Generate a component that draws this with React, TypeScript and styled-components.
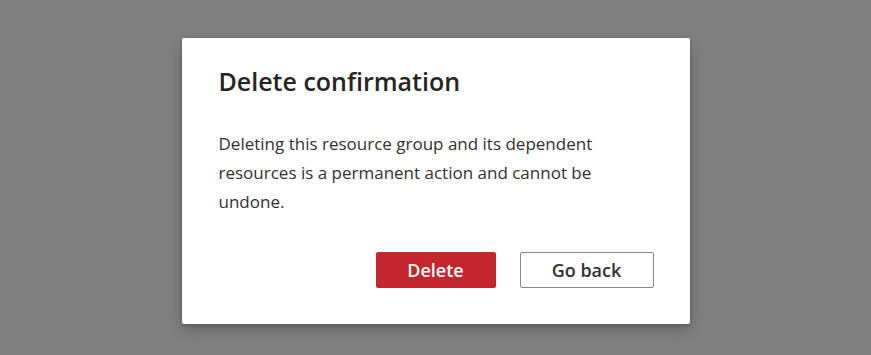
import styled, { createGlobalStyle } from "styled-components";

const GlobalStyle = createGlobalStyle`
  html, body {
    margin: 0;
    padding: 0;
    height: 100%;
  }
  body {
    background: #808080;
    font-family: "Open Sans", "Noto Sans", sans-serif;
    color: #323130;
  }
`;

const Backdrop = styled.div`
  width: 871px;
  height: 355px;
  display: flex;
  justify-content: center;
  padding-top: 38px;
  box-sizing: border-box;
`;

const Dialog = styled.div`
  width: 508px;
  height: 286px;
  box-sizing: border-box;
  background: #ffffff;
  border-radius: 2px;
  box-shadow: 0 6px 14px rgba(0, 0, 0, 0.22), 0 1px 4px rgba(0, 0, 0, 0.18);
  padding: 26px 36px 0 37px;
  display: flex;
  flex-direction: column;
`;

const Title = styled.h1`
  margin: 0;
  font-size: 25px;
  font-weight: 600;
  line-height: 34px;
  color: #252423;
`;

const Message = styled.p`
  margin: 31px 0 0;
  font-size: 17px;
  line-height: 29px;
  color: #323130;
`;

const Actions = styled.div`
  margin-top: 36px;
  display: flex;
  justify-content: flex-end;
  gap: 24px;
`;

const Button = styled.button<{ $primary?: boolean }>`
  height: 36px;
  width: ${(p) => (p.$primary ? "120px" : "134px")};
  border-radius: 2px;
  font-family: inherit;
  font-size: 18px;
  font-weight: 600;
  cursor: pointer;
  border: 1px solid ${(p) => (p.$primary ? "#c4262e" : "#8a8886")};
  background: ${(p) => (p.$primary ? "#c4262e" : "#ffffff")};
  color: ${(p) => (p.$primary ? "#ffffff" : "#323130")};
`;

export default function App() {
  return (
    <>
      <GlobalStyle />
      <Backdrop>
        <Dialog role="dialog" aria-labelledby="delete-title">
          <Title id="delete-title">Delete confirmation</Title>
          <Message>
            Deleting this resource group and its dependent resources is a permanent action and
            cannot be undone.
          </Message>
          <Actions>
            <Button $primary>Delete</Button>
            <Button>Go back</Button>
          </Actions>
        </Dialog>
      </Backdrop>
    </>
  );
}
